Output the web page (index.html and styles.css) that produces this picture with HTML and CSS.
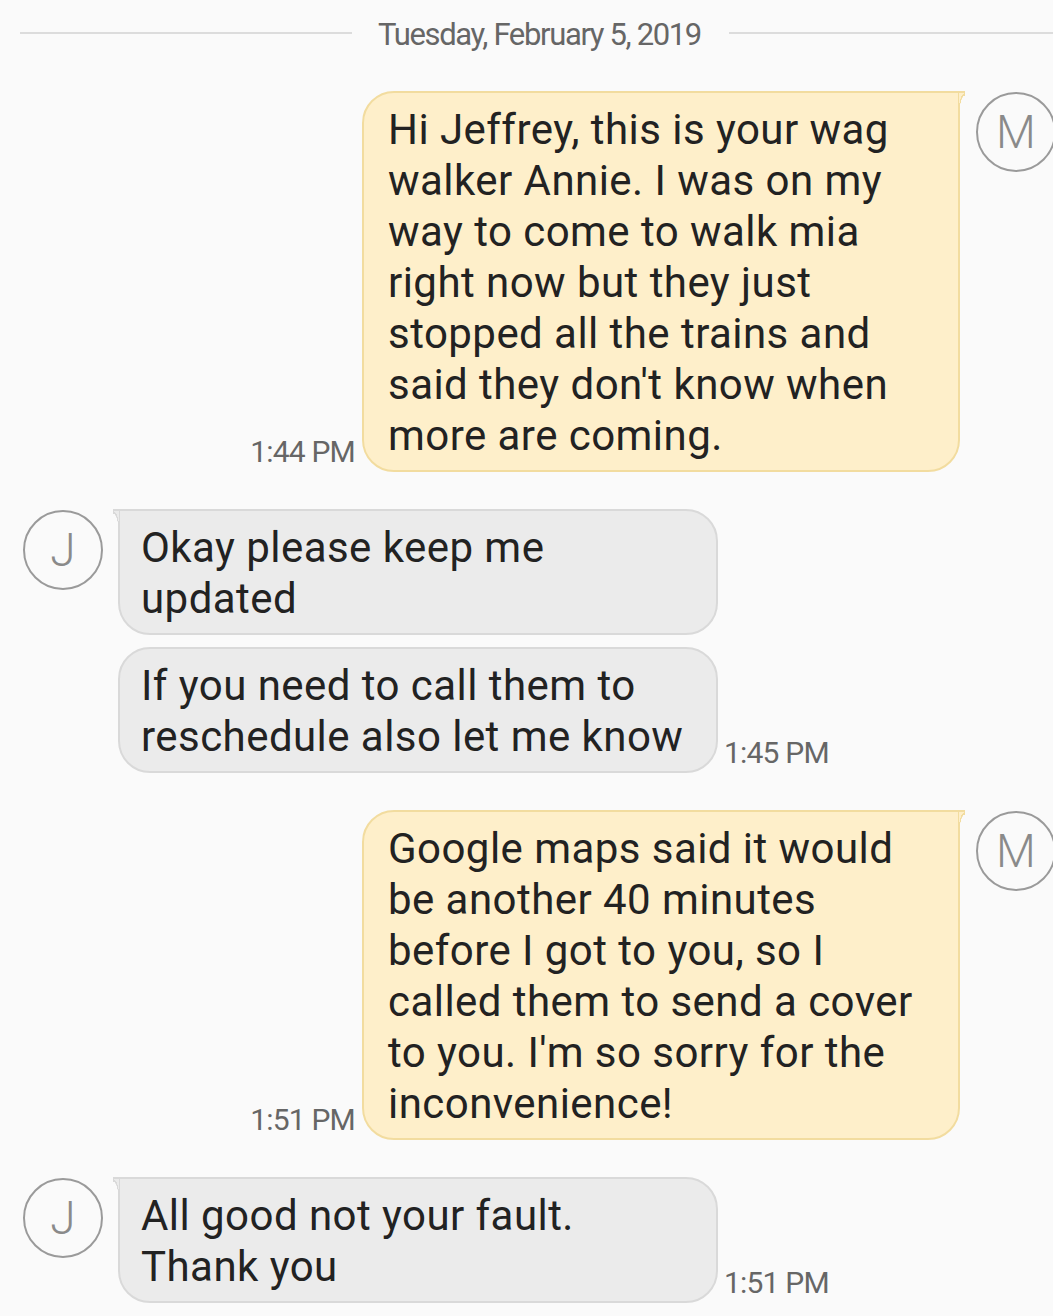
FILE: index.html
```html
<!DOCTYPE html>
<html>
<head>
<meta charset="utf-8">
<link rel="stylesheet" href="styles.css">
</head>
<body>
<div class="thread">
  <div class="date-row">
    <span class="date-line left"></span>
    <span class="date-text">Tuesday, February 5, 2019</span>
    <span class="date-line right"></span>
  </div>

  <div class="row out">
    <span class="time">1:44 PM</span>
    <div class="bubble out-bubble tail-right">Hi Jeffrey, this is your wag<br>walker Annie. I was on my<br>way to come to walk mia<br>right now but they just<br>stopped all the trains and<br>said they don't know when<br>more are coming.</div>
    <div class="avatar">M</div>
  </div>

  <div class="row in">
    <div class="avatar">J</div>
    <div class="bubble in-bubble tail-left">Okay please keep me<br>updated</div>
  </div>
  <div class="row in cont">
    <div class="avatar-space"></div>
    <div class="bubble in-bubble">If you need to call them to<br>reschedule also let me know</div>
    <span class="time">1:45 PM</span>
  </div>

  <div class="row out">
    <span class="time">1:51 PM</span>
    <div class="bubble out-bubble tail-right">Google maps said it would<br>be another 40 minutes<br>before I got to you, so I<br>called them to send a cover<br>to you. I'm so sorry for the<br>inconvenience!</div>
    <div class="avatar">M</div>
  </div>

  <div class="row in">
    <div class="avatar">J</div>
    <div class="bubble in-bubble tail-left">All good not your fault.<br>Thank you</div>
    <span class="time">1:51 PM</span>
  </div>
</div>
</body>
</html>
```

FILE: styles.css
```css
html, body {
  margin: 0;
  padding: 0;
  background: #fafafa;
  overflow: hidden;
}

.thread {
  width: 1053px;
  display: flex;
  flex-direction: column;
  font-family: Roboto, "Noto Sans", sans-serif;
}

.date-row {
  height: 65px;
  display: flex;
  align-items: center;
  padding-left: 20px;
}

.date-line {
  height: 2px;
  background: #dcdcdc;
}

.date-line.left {
  width: 332px;
  flex: none;
  margin-right: 26px;
}

.date-line.right {
  flex: 1;
  margin-left: 28px;
}

.date-text {
  font-size: 31px;
  color: #666;
  letter-spacing: -1.35px;
  white-space: nowrap;
  margin-top: 3px;
}

.row {
  display: flex;
  align-items: flex-start;
  margin-top: 37px;
}

.row.out {
  justify-content: flex-end;
  margin-right: -3px;
}

.row.in {
  padding-left: 23px;
}

.row.in.cont {
  margin-top: 12px;
}

.date-row + .row {
  margin-top: 26px;
}

.avatar {
  width: 76px;
  height: 76px;
  border: 2px solid #9a9a9a;
  border-radius: 50%;
  display: flex;
  align-items: center;
  justify-content: center;
  font-size: 46px;
  font-weight: 300;
  color: #8a8a8a;
  flex-shrink: 0;
  margin-top: 1px;
}

.avatar-space {
  width: 80px;
  flex-shrink: 0;
}

.row.out .avatar {
  margin-left: 16px;
}

.row.in .avatar,
.row.in .avatar-space {
  margin-right: 15px;
}

.bubble {
  position: relative;
  box-sizing: border-box;
  width: 600px;
  border: 2px solid;
  border-radius: 32px;
  font-size: 42px;
  letter-spacing: 0.45px;
  line-height: 51px;
  color: #222;
  padding: 11px 20px 9px 24px;
  flex-shrink: 0;
  white-space: nowrap;
}

.out-bubble {
  width: 598px;
  background: #feefca;
  border-color: #f2dc9f;
}

.in-bubble {
  background: #ebebeb;
  border-color: #d9d9d9;
  padding-left: 21px;
}

.tail-right {
  border-top-right-radius: 0;
}

.tail-left {
  border-top-left-radius: 0;
}

.tail-right::after,
.tail-left::after {
  content: "";
  position: absolute;
  top: -2px;
  width: 6px;
  height: 16px;
}

.tail-right::after {
  right: -7px;
  border-top: 2px solid #f2dc9f;
  background: radial-gradient(ellipse 6px 16px at 100% 100%, transparent 0 82%, #f2dc9f 84% 98%, #feefca 100%);
}

.tail-left::after {
  left: -7px;
  border-top: 2px solid #d9d9d9;
  background: radial-gradient(ellipse 6px 16px at 0% 100%, transparent 0 82%, #d9d9d9 84% 98%, #ebebeb 100%);
}

.time {
  align-self: flex-end;
  font-size: 30px;
  color: #666;
  letter-spacing: -0.8px;
  white-space: nowrap;
  margin-bottom: 3px;
}

.row.out .time {
  margin-right: 7px;
}

.row.in .time {
  margin-left: 6px;
}
```
